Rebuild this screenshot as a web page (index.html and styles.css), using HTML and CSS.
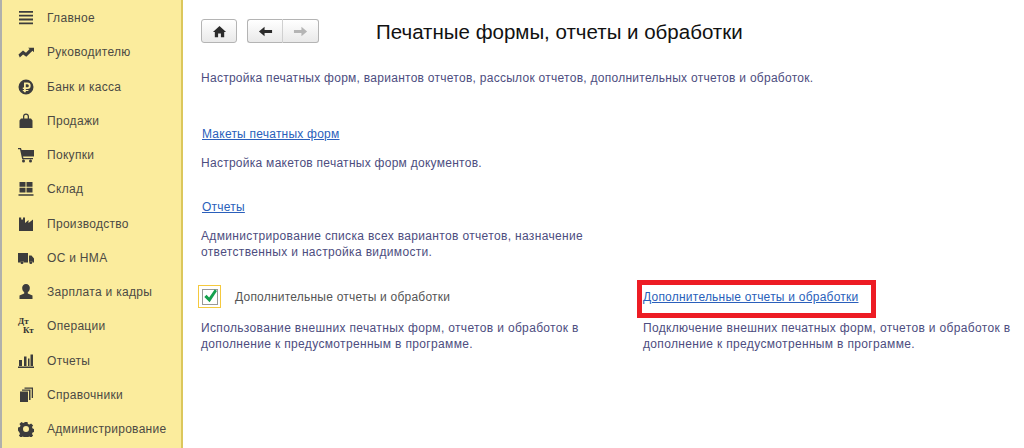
FILE: index.html
```html
<!DOCTYPE html>
<html lang="ru">
<head>
<meta charset="utf-8">
<title>Печатные формы, отчеты и обработки</title>
<link rel="stylesheet" href="styles.css">
</head>
<body>
<div class="app">
  <nav class="side">
    <a class="nav-item"><svg class="ico" viewBox="0 0 16 16"><path d="M1 1h14v1.800H1zM1 4.800h14v1.800H1zM1 8.600h14v1.800H1zM1 12.400h14v1.800H1z"/></svg><span>Главное</span></a>
    <a class="nav-item"><svg class="ico" viewBox="0 0 16 16"><path d="M.5 10.500l4.500-4 3 2.200 3.600-3.600-1.500-1.400H16v4.600l-1.500-1.500-6.200 6-3.200-2.400-3.300 3z"/></svg><span>Руководителю</span></a>
    <a class="nav-item"><svg class="ico" viewBox="0 0 16 16"><path fill-rule="evenodd" d="M8 .5a7.500 7.500 0 1 1 0 15 7.500 7.500 0 0 1 0-15zM6 3.500v5H4.800V10H6v1H4.800v1.200H6v1h1.800v-1.200h2.600V11H7.800v-1h1.600a3.200 3.200 0 0 0 0-6.500zM7.800 5.200h1.500a1.500 1.500 0 0 1 0 3.100H7.800z"/></svg><span>Банк и касса</span></a>
    <a class="nav-item"><svg class="ico" viewBox="0 0 16 16"><path d="M3 5.500h2V3.500C5 1.800 6.200.5 8 .5s3 1.300 3 3v2h2l1.500 2V15h-13V7.500zM6.300 5.500h3.400V3.500C9.700 2.500 9 1.800 8 1.800s-1.700.7-1.700 1.700z"/></svg><span>Продажи</span></a>
    <a class="nav-item"><svg class="ico" viewBox="0 0 16 16"><path d="M0 1h3l.6 2H16v6.500H5l.4 1.500H15v1.300H4.200L2 2.300H0zM5.500 12.500a1.500 1.500 0 1 1 0 3 1.500 1.500 0 0 1 0-3zM12.500 12.500a1.500 1.500 0 1 1 0 3 1.500 1.500 0 0 1 0-3z"/></svg><span>Покупки</span></a>
    <a class="nav-item"><svg class="ico" viewBox="0 0 16 16"><path d="M1.500 1h6v4.800h-6zM8.500 1h6v4.800h-6zM1.500 6.800h6v4.800h-6zM8.500 6.800h6v4.800h-6zM.5 13.200h15v1.500H.5z"/></svg><span>Склад</span></a>
    <a class="nav-item"><svg class="ico" viewBox="0 0 16 16"><path d="M1 1.500h2.200v2H5v-2h2V7l3.500-3v3L15 3.500V15H1z"/></svg><span>Производство</span></a>
    <a class="nav-item"><svg class="ico" viewBox="0 0 16 16"><path d="M0 3h10v9.500H6a2 2 0 0 0-3.800 0H0zM11 5.500h2.500L16 8.500v4h-1.200a2 2 0 0 0-3.800 0zM4 11a1.500 1.500 0 1 1 0 3 1.500 1.500 0 0 1 0-3zM12.800 11a1.500 1.500 0 1 1 0 3 1.500 1.500 0 0 1 0-3z"/></svg><span>ОС и НМА</span></a>
    <a class="nav-item"><svg class="ico" viewBox="0 0 16 16"><path d="M8 0a3.800 3.800 0 0 1 3.800 4.200c0 2-1 3.300-2 4v1.300l4.700 2V15h-13v-3.500l4.700-2V8.200c-1-.7-2-2-2-4A3.800 3.800 0 0 1 8 0z"/></svg><span>Зарплата и кадры</span></a>
    <a class="nav-item"><span class="dtkt"><b>Дт</b><b class="kt">Кт</b></span><span>Операции</span></a>
    <a class="nav-item"><svg class="ico" viewBox="0 0 16 16"><path d="M1 7h3v6H1zM6 3.500h2.500V13H6zM10 5.500h1.500V13H10zM12.500 1.500H15V13h-2.500zM0 13.500h16V15H0z"/></svg><span>Отчеты</span></a>
    <a class="nav-item"><svg class="ico" viewBox="0 0 16 16"><path d="M2 4.500h8V15H2zM4 2.500h8.500V13h-1.500V3.700H4zM6.500.5H15V11h-1.300V1.700H6.500z"/></svg><span>Справочники</span></a>
    <a class="nav-item"><svg class="ico" viewBox="0 0 16 16"><path fill-rule="evenodd" d="M6.500 1h3l.4 1.900 1.500.6 1.700-1.100 2 2-1.100 1.700.6 1.500 1.900.4v3l-1.900.4-.6 1.500 1.100 1.700-2 2-1.700-1.100-1.500.6-.4 1.900h-3l-.4-1.900-1.500-.6-1.700 1.100-2-2 1.100-1.700-.6-1.500L0 9.500v-3l1.900-.4.6-1.500-1.100-1.700 2-2 1.700 1.100 1.500-.6zM8 5a3 3 0 1 0 0 6 3 3 0 0 0 0-6z"/></svg><span>Администрирование</span></a>
  </nav>
  <main class="main">
    <header class="top">
      <button class="btn home"><svg viewBox="0 0 16 16" class="bi"><path d="M8 2l7 6.500h-2V14H9.500v-4h-3v4H3V8.500H1z"/></svg></button>
      <div class="btn-group">
        <button class="btn seg"><svg viewBox="0 0 16 16" class="bi"><path d="M7 3v3.500h8v3H7V13L1 8z"/></svg></button>
        <button class="btn seg off"><svg viewBox="0 0 16 16" class="bi"><path d="M9 3v3.500H1v3h8V13l6-5z"/></svg></button>
      </div>
      <h1 class="title">Печатные формы, отчеты и обработки</h1>
    </header>
    <p class="txt lead">Настройка печатных форм, вариантов отчетов, рассылок отчетов, дополнительных отчетов и обработок.</p>
    <a class="link first" href="#">Макеты печатных форм</a>
    <p class="txt d1">Настройка макетов печатных форм документов.</p>
    <a class="link second" href="#">Отчеты</a>
    <p class="txt wide d2">Администрирование списка всех вариантов отчетов, назначение<br>ответственных и настройка видимости.</p>
    <section class="pair">
      <div class="col left">
        <label class="check">
          <span class="box"><svg viewBox="0 0 16 16"><path d="M1.500 8l2.500-2.500 3 3.200L13.500-1 16 1 7.600 14z"/></svg></span>
          <span class="check-label">Дополнительные отчеты и обработки</span>
        </label>
        <p class="txt wide">Использование внешних печатных форм, отчетов и обработок в<br>дополнение к предусмотренным в программе.</p>
      </div>
      <div class="col right">
        <div class="link-row">
          <a class="link" href="#">Дополнительные отчеты и обработки</a>
          <span class="red"></span>
        </div>
        <p class="txt wide">Подключение внешних печатных форм, отчетов и обработок в<br>дополнение к предусмотренным в программе.</p>
      </div>
    </section>
  </main>
</div>
</body>
</html>
```
FILE: styles.css
```css
* { box-sizing: border-box; }
html, body { margin: 0; height: 100%; }
body { font-family: "Liberation Sans", Arial, sans-serif; font-size: 12px; background: #fff; overflow: hidden; }
.app { display: flex; width: 1024px; height: 448px; overflow: hidden; }

.side {
  width: 183px; flex: none; height: 448px;
  background: #fbec9d;
  border-left: 2px solid #b0b0ac;
  border-right: 2px solid #dcc75c;
  padding-top: 1px;
  display: flex; flex-direction: column;
}
.nav-item { display: flex; align-items: center; flex: none; height: 34.25px; padding-left: 16px; color: #4c4a44; letter-spacing: .3px; }
.ico { width: 16px; height: 16px; flex: none; margin-right: 13px; fill: #3c3c3c; }
.dtkt { width: 16px; height: 18px; flex: none; margin-right: 13px; display: flex; flex-direction: column; font-family: "Liberation Serif", serif; font-size: 9px; line-height: 9px; color: #333; letter-spacing: 0; }
.dtkt b { display: block; }
.dtkt .kt { padding-left: 5px; }

.main { flex: 1; padding-left: 18px; min-width: 0; }
.top { display: flex; align-items: center; height: 24px; margin-top: 19px; }
.btn {
  padding: 0; display: flex; align-items: center; justify-content: center;
  height: 24px; background: linear-gradient(#fff, #e9e9e9);
  border: 1px solid #b4b4b4; border-radius: 3px;
}
.home { width: 36px; }
.btn-group { display: flex; margin-left: 10px; }
.seg { width: 36px; }
.seg:first-child { border-radius: 3px 0 0 3px; border-right: 1px solid #d0d0d0; }
.seg:last-child { border-radius: 0 3px 3px 0; border-left: 0; }
.bi { width: 15px; height: 15px; fill: #2b2b2b; }
.off .bi { fill: #b5b5b5; }
.title { margin: 2px 0 0 57px; font-size: 20.5px; font-weight: 400; color: #111; white-space: nowrap; }

.txt { margin: 0; color: #4d4d80; line-height: 16px; letter-spacing: .27px; white-space: nowrap; }
.wide { letter-spacing: .34px; }
.lead { margin-top: 27px; }
.link { display: block; color: #2a5fbb; text-decoration: underline; line-height: 16px; letter-spacing: .23px; white-space: nowrap; width: fit-content; }
.first { margin: 40px 0 0 1px; }
.d1 { margin-top: 13px; }
.second { margin: 28px 0 0 1px; }
.d2 { margin-top: 13px; }

.pair { display: flex; margin-top: 24px; }
.col.left { width: 442px; }
.check { display: flex; align-items: center; height: 25px; margin-left: -3px; }
.box {
  width: 23px; height: 23px; display: flex; align-items: center; justify-content: center;
  border: 1px solid #f5c93e; background: #fff;
}
.box svg { width: 16px; height: 16px; fill: #14a04e; border: 1px solid #999; background: #fff; overflow: visible; }
.check-label { margin-left: 14px; color: #555; letter-spacing: .22px; }
.left .txt { margin-top: 11px; }
.right .txt { margin-top: 11px; }
.link-row { position: relative; height: 25px; display: flex; align-items: center; }
.red { position: absolute; left: -6px; top: -4px; width: 239px; height: 38px; border: 5px solid #ed1c24; }
```
